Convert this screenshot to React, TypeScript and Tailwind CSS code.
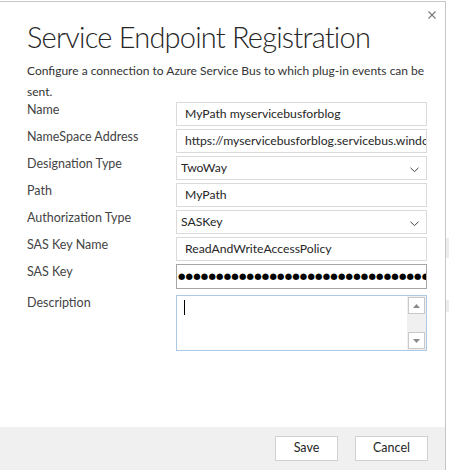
import React from "react";

const font = { fontFamily: 'Lato, "Open Sans", sans-serif' };

function Chevron() {
  return (
    <svg width="9" height="6" viewBox="0 0 9 6" className="absolute right-[7px] top-[10px]">
      <path d="M0.5 0.8 L4.5 4.6 L8.5 0.8" fill="none" stroke="#444" strokeWidth="1" />
    </svg>
  );
}

function Label({ children }: { children: React.ReactNode }) {
  return <div className="w-[149px] shrink-0 text-[12.5px] leading-[15px] text-[#444]">{children}</div>;
}

export default function App() {
  const rows: { label: string; kind: "text" | "select"; value: string }[] = [
    { label: "Name", kind: "text", value: "MyPath myservicebusforblog" },
    { label: "NameSpace Address", kind: "text", value: "https://myservicebusforblog.servicebus.windows.net/" },
    { label: "Designation Type", kind: "select", value: "TwoWay" },
    { label: "Path", kind: "text", value: "MyPath" },
    { label: "Authorization Type", kind: "select", value: "SASKey" },
    { label: "SAS Key Name", kind: "text", value: "ReadAndWriteAccessPolicy" },
  ];
  return (
    <div className="w-[449px] h-[470px] flex bg-white overflow-hidden" style={font}>
      <div className="relative w-[446px] h-[469px] mt-[1px] border-t border-r border-[#c6c6c6] flex flex-col bg-white">
        <div className="absolute right-[9px] top-[9px]">
          <svg width="8" height="8" viewBox="0 0 8 8">
            <path d="M0.5 0.5 L7.5 7.5 M7.5 0.5 L0.5 7.5" stroke="#7a7a7a" strokeWidth="1.1" />
          </svg>
        </div>
        <div className="pl-[27px] pr-[18px] pt-[15px] flex-1">
          <h1 className="text-[29px] leading-[40px] font-light text-[#262626] whitespace-nowrap tracking-[-0.8px]">Service Endpoint Registration</h1>
          <p className="mt-[3px] text-[12px] leading-[21px] text-[#333] whitespace-nowrap">
            Configure a connection to Azure Service Bus to which plug-in events can be
            <br />
            sent.
          </p>
          <div className="mt-[0px] flex flex-col gap-[3px]">
            {rows.map((r) => (
              <div key={r.label} className="flex">
                <Label>{r.label}</Label>
                <div className="relative w-[252px] h-[24px] border border-[#dadada] bg-white overflow-hidden">
                  <div
                    className={
                      "whitespace-nowrap text-[12.2px] leading-[22px] text-[#262626] " +
                      (r.kind === "select" ? "pl-[4px]" : "pl-[8px]")
                    }
                  >
                    {r.value}
                  </div>
                  {r.kind === "select" && <Chevron />}
                </div>
              </div>
            ))}
            <div className="flex">
              <Label>SAS Key</Label>
              <div className="w-[252px] h-[25px] border border-[#a6a6a6] bg-white overflow-hidden">
                <div
                  className="whitespace-nowrap pl-[1px] text-[8.5px] leading-[23px] text-black tracking-[0.2px]"
                  style={{ fontFamily: '"DejaVu Sans", sans-serif' }}
                >
                  {"●".repeat(45)}
                </div>
              </div>
            </div>
            <div className="flex mt-[3px]">
              <Label>Description</Label>
              <div className="relative w-[252px] h-[56px] border border-[#a9c9e6] bg-white flex">
                <div className="flex-1 pl-[7px] pt-[4px]">
                  <div className="w-[1px] h-[15px] bg-black" />
                </div>
                <div className="w-[19px] bg-[#f0f0f0] flex flex-col justify-between items-center py-[1px]">
                  <div className="w-[17px] h-[17px] border border-[#c8c8c8] bg-white flex items-center justify-center">
                    <svg width="7" height="4" viewBox="0 0 7 4"><path d="M0 4 L3.5 0 L7 4 Z" fill="#8a8a8a" /></svg>
                  </div>
                  <div className="w-[17px] h-[17px] border border-[#c8c8c8] bg-white flex items-center justify-center">
                    <svg width="7" height="4" viewBox="0 0 7 4"><path d="M0 0 L3.5 4 L7 0 Z" fill="#8a8a8a" /></svg>
                  </div>
                </div>
              </div>
            </div>
          </div>
        </div>
        <div className="h-[43px] bg-[#f0f0f0] flex justify-end items-start gap-[17px] pr-[17px] pt-[9px]">
          <button className="w-[63px] h-[25px] border border-[#d0d0d0] bg-white text-[12.5px] text-[#262626]">Save</button>
          <button className="w-[73px] h-[25px] border border-[#d0d0d0] bg-white text-[12.5px] text-[#262626]">Cancel</button>
        </div>
      </div>
      <div className="flex-1 flex flex-col bg-white">
        <div className="h-[238px]" />
        <div className="h-[20px] bg-[#ececec]" />
        <div className="h-[42px]" />
        <div className="h-[12px] bg-[#ececec]" />
      </div>
    </div>
  );
}
